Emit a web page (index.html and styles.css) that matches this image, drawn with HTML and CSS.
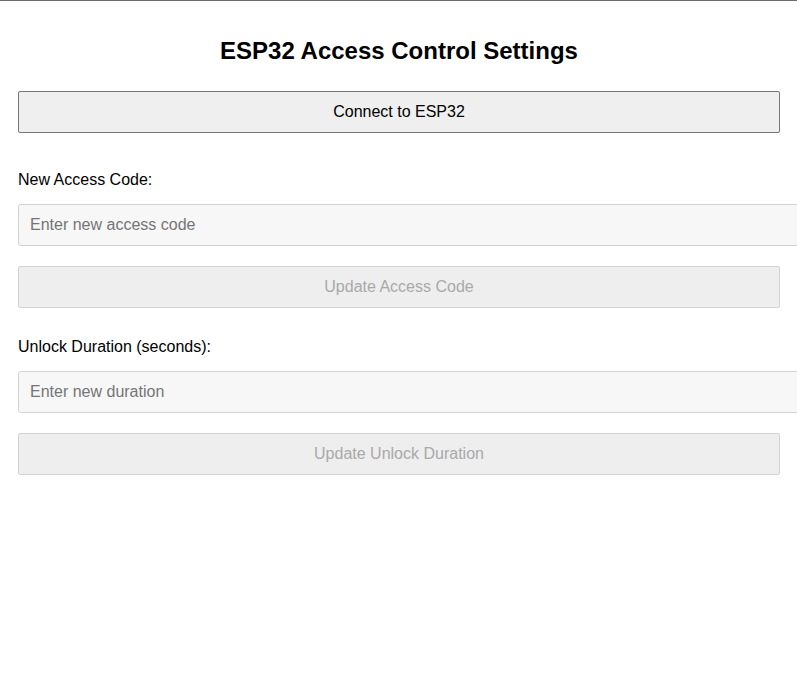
FILE: index.html
```html
<!DOCTYPE html>
<html>
<head>
<meta charset="utf-8">
<title>ESP32 Access Control Settings</title>
<link rel="stylesheet" href="styles.css">
</head>
<body>
<div class="page">
  <h1 class="title">ESP32 Access Control Settings</h1>
  <button class="btn btn-connect">Connect to ESP32</button>
  <section class="field">
    <label class="label" for="code">New Access Code:</label>
    <input class="input" id="code" type="text" placeholder="Enter new access code">
    <button class="btn" disabled>Update Access Code</button>
  </section>
  <section class="field">
    <label class="label" for="dur">Unlock Duration (seconds):</label>
    <input class="input" id="dur" type="number" placeholder="Enter new duration">
    <button class="btn" disabled>Update Unlock Duration</button>
  </section>
</div>
</body>
</html>
```
FILE: styles.css
```css
html, body {
  margin: 0;
  padding: 0;
  background: #ffffff;
}
body {
  border-top: 1px solid #6b6b6b;
  font-family: "Liberation Sans", Arial, sans-serif;
  color: #000;
}
.page {
  padding: 0 17px 0 18px;
}
.title {
  font-size: 24px;
  font-weight: bold;
  text-align: center;
  margin: 36px 0 27px;
  line-height: 27px;
}
.btn {
  display: block;
  box-sizing: border-box;
  width: 100%;
  height: 42px;
  margin: 0;
  padding: 0;
  font-family: "Liberation Sans", Arial, sans-serif;
  font-size: 16px;
  color: #000;
  background: #efefef;
  border: 1px solid #767676;
  border-radius: 2px;
}
.btn:disabled {
  color: #a9a9a9;
  background: #eeeeee;
  border-color: #d3d3d3;
}
.btn-connect {
  margin-bottom: 38px;
}
.field {
  display: block;
}
.field + .field {
  margin-top: 30px;
}
.label {
  display: block;
  font-size: 16px;
  line-height: 18px;
  margin: 0 0 15px;
}
.input {
  display: block;
  width: 100%;
  height: 40px;
  margin: 0 0 20px;
  padding: 0 11px;
  font-family: "Liberation Sans", Arial, sans-serif;
  font-size: 16px;
  color: #000;
  background: #f7f7f7;
  border: 1px solid #d3d3d3;
  border-radius: 3px;
  outline: none;
}
.input::placeholder {
  color: #757575;
}
input[type=number]::-webkit-inner-spin-button,
input[type=number]::-webkit-outer-spin-button {
  -webkit-appearance: none;
  margin: 0;
}
```
